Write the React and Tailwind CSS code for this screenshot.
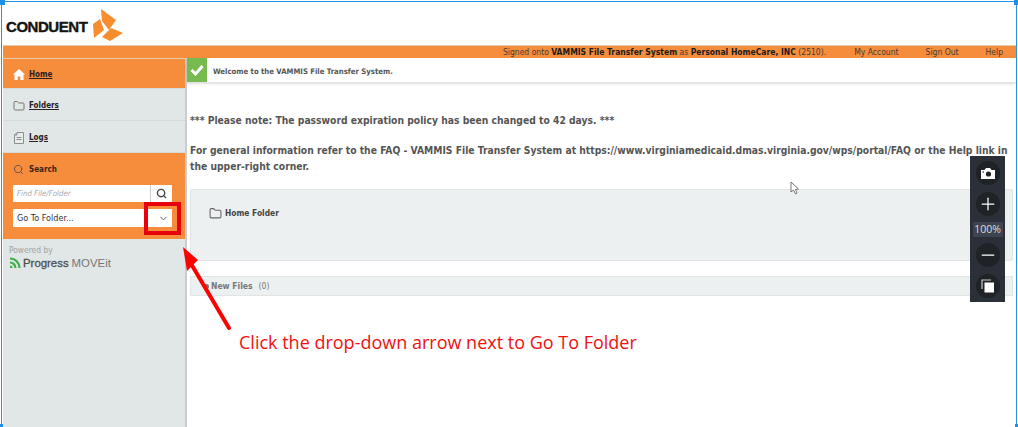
import React from "react";
import { Folder, Search, ChevronDown, Plus, Minus } from "lucide-react";

const Tag = ({ children }) => <span className="font-bold underline text-[#2a2020] text-[8px]">{children}</span>;

function NavRow({ icon, label, active, h }) {
  return (
    <div className={`flex items-center gap-[4px] pl-[10px] pt-[2px] border-b border-[#d5dbdb] ${h} ${active ? "bg-[#f68d3d]" : "bg-[#e1e6e6]"}`}>
      <span className="w-[12px] flex justify-center">{icon}</span>
      <Tag>{label}</Tag>
    </div>
  );
}

export default function App() {
  return (
    <div className="relative w-[1018px] h-[427px] overflow-hidden bg-white font-['DejaVu_Sans_Condensed','DejaVu_Sans',sans-serif] pl-[3px] pr-[2px] pt-[2px]">
      <header className="h-[43px] flex items-start pl-[3px]">
        <span className="mt-[17px] font-['Liberation_Sans',sans-serif] font-bold text-[15px] leading-[15px] text-[#141414] [-webkit-text-stroke:0.4px_#141414] tracking-[-0.45px]">CONDUENT</span>
        <svg width="33" height="33" viewBox="0 0 33 33" className="ml-[5px] mt-[7px]">
          <path d="M9 0 L24 11 L17 21 L10 12 Z" fill="#f68d2e" />
          <path d="M1 15 L8 10 L12 21 L2 29 Z" fill="#f68d2e" />
          <path d="M10 28 L19 19 L31 24 L18 32 Z" fill="#f68d2e" />
        </svg>
      </header>
      <div className="h-[13px] bg-[#f68d3d] border-t border-[#e8c9a8] flex items-center justify-end text-[8.5px] text-[#4a3a30]">
        <span className="mr-[28px]">Signed onto <b className="text-[#1c1c1c]">VAMMIS File Transfer System</b> as <b className="text-[#1c1c1c]">Personal HomeCare, INC</b> (2510).</span>
        <span className="mr-[27px]">My Account</span>
        <span className="mr-[27px]">Sign Out</span>
        <span className="mr-[13px]">Help</span>
      </div>
      <div className="flex h-[369px]">
        <aside className="w-[184px] shrink-0 bg-[#e1e6e6] border-t border-[#e8c9a8] border-r-2 border-r-[#c9cdcd]">
          <NavRow h="h-[30px]" active label="Home" icon={
            <svg width="12" height="11" viewBox="0 0 12 11" fill="white"><path d="M6 0 L12 5.5 L10.5 5.5 L10.5 11 L7.3 11 L7.3 7.5 L4.7 7.5 L4.7 11 L1.5 11 L1.5 5.5 L0 5.5 Z" /></svg>
          } />
          <NavRow h="h-[32px]" label="Folders" icon={<Folder size={12} color="#777" />} />
          <NavRow h="h-[32px]" label="Logs" icon={
            <svg width="10" height="12" viewBox="0 0 10 12" fill="#e8ecec" stroke="#8a8f8f" strokeWidth="1"><path d="M3 .5 H9.5 V11.5 H.5 V3 Z M.5 3 H3 V.5 M2.5 5.5 H7.5 M2.5 7.5 H7.5" /></svg>
          } />
          <div className="h-[86px] bg-[#f68d3d] px-[10px] pt-[10px]">
            <div className="flex items-center gap-[5px] h-[13px]">
              <Search size={11} color="#6a5040" />
              <span className="font-bold text-[8px] text-[#3a2418]">Search</span>
            </div>
            <div className="mt-[9px] flex h-[17px] w-[159px] bg-white rounded-[1px]">
              <span className="flex-1 pl-[4px] text-[7.8px] italic text-[#aaa] leading-[17px]">Find File/Folder</span>
              <span className="w-[22px] flex items-center justify-center border-l border-[#ccc]"><Search size={11} strokeWidth={3} color="#444" /></span>
            </div>
            <div className="mt-[7px] flex h-[18px] w-[159px] bg-white rounded-[1px]">
              <span className="flex-1 pl-[4px] text-[9px] text-[#333] leading-[18px]">Go To Folder...</span>
              <span className="w-[22px] pl-[5px] flex items-center justify-center"><ChevronDown size={11} color="#555" /></span>
            </div>
          </div>
          <div className="pl-[6px] pt-[6px]">
            <div className="text-[8.4px] text-[#a0a5a5] leading-[10px]">Powered by</div>
            <div className="flex items-center font-['Liberation_Sans',sans-serif] text-[11.4px] text-[#4a4f4f] leading-[14px] mt-[1px]">
              <svg width="12" height="12" viewBox="0 0 12 12" fill="none" stroke="#3fae49" strokeWidth="2.2" className="mr-[2px]">
                <path d="M1 1.5 A9.5 9.5 0 0 1 10.5 11 M1 5.5 A5.5 5.5 0 0 1 6.5 11 M1 9.5 A1.5 1.5 0 0 1 2.5 11" />
              </svg>
              <span className="[-webkit-text-stroke:0.3px_#4a4f4f]">Progress</span>
              <span className="ml-[3px] text-[#777]">MOVEit</span>
            </div>
          </div>
        </aside>
        <main className="flex-1 min-w-0">
          <div className="h-[25px] flex border-b border-[#e4e4e4] shadow-sm">
            <span className="w-[20px] h-[24px] bg-[#76bb4f] flex items-center justify-center">
              <svg width="14" height="12" viewBox="0 0 14 12"><path d="M1.5 6 L5.5 10 L12.5 2" stroke="white" strokeWidth="3" fill="none" /></svg>
            </span>
            <span className="ml-[6px] text-[7.7px] leading-[25px] pt-[1px] font-bold text-[#555]">Welcome to the VAMMIS File Transfer System.</span>
          </div>
          <div className="pl-[3px] pt-[29px] text-[10.25px] font-bold text-[#555] leading-[16px]">
            <p>*** Please note: The password expiration policy has been changed to 42 days. ***</p>
            <p className="mt-[14px] pr-[2px]">For general information refer to the FAQ - VAMMIS File Transfer System at https://www.virginiamedicaid.dmas.virginia.gov/wps/portal/FAQ or the Help link in the upper-right corner.</p>
          </div>
          <div className="mt-[15px] ml-[3px] mr-[3px] h-[72px] bg-[#edf0f0] border border-[#e2e5e5] rounded-[2px] flex items-start pl-[18px] pt-[17px] gap-[3px]">
            <Folder size={13} color="#666" />
            <span className="text-[8.4px] font-bold text-[#444]">Home Folder</span>
          </div>
          <div className="mt-[15px] ml-[3px] mr-[3px] h-[20px] bg-[#edf0f0] border border-[#e2e5e5] flex items-center pl-[13px] text-[8.5px] text-[#777]">
            <span className="w-[5px] h-[5px] rounded-full bg-[#777] mr-[2px]" />
            <b>New Files</b><span className="ml-[6px]">(0)</span>
          </div>
        </main>
      </div>

      {/* selection frame */}
      <div className="absolute left-[1px] top-[1px] right-[1px] bottom-[1px] border border-[#2196e8] border-b-0 pointer-events-none" />
      <div className="absolute left-0 top-0 w-[5px] h-[5px] bg-[#1e90e8]" />
      <div className="absolute right-0 top-0 w-[4px] h-[5px] bg-[#1e90e8]" />
      <div className="absolute left-0 bottom-0 w-[3px] h-[3px] bg-[#1e90e8]" />
      <div className="absolute right-0 bottom-0 w-[3px] h-[3px] bg-[#1e90e8]" />

      {/* annotation */}
      <div className="absolute left-[144px] top-[202px] w-[37px] h-[33px] border-[4px] border-[#e8000b]" />
      <svg width="70" height="100" viewBox="0 0 70 100" className="absolute left-[175px] top-[240px]">
        <path d="M54 88 L15 22" stroke="#f00" strokeWidth="4" strokeLinecap="round" />
        <path d="M8 7 L23 20 L12 31 Z" fill="#f00" />
      </svg>
      <div className="absolute left-[239px] top-[330px] text-[18px] leading-[24px] text-[#f01010] font-['Open_Sans',sans-serif]">Click the drop-down arrow next to Go To Folder</div>

      {/* cursor */}
      <svg width="10" height="14" viewBox="0 0 10 14" className="absolute left-[790px] top-[181px]">
        <path d="M1 1 V11 L3.5 9 L5.5 13 L7 12 L5.5 8.5 L8.5 8 Z" fill="white" stroke="#555" strokeWidth="0.8" />
      </svg>

      {/* zoom toolbar */}
      <div className="absolute left-[970px] top-[156px] w-[35px] h-[146px] bg-[#2b2f38] flex flex-col items-center pt-[5px] text-white">
        <span className="w-[24px] h-[24px] rounded-full bg-[#1f2226] flex items-center justify-center">
          <svg width="16" height="13" viewBox="0 0 16 13"><path d="M1 3 H4.5 L6 1 H10 L11.5 3 H15 V12 H1 Z" fill="white" /><circle cx="8.5" cy="7" r="2.6" fill="#1f2226" /><circle cx="3.2" cy="5" r="0.8" fill="#1f2226" /></svg>
        </span>
        <span className="mt-[7px] w-[24px] h-[24px] rounded-full bg-[#1f2226] flex items-center justify-center"><Plus size={20} strokeWidth={1.5} /></span>
        <span className="mt-[6px] w-[30px] h-[15px] bg-[#3d4350] text-[10.5px] leading-[15px] text-center text-[#ddd] font-['Open_Sans',sans-serif]">100%</span>
        <span className="mt-[6px] w-[24px] h-[24px] rounded-full bg-[#1f2226] flex items-center justify-center"><Minus size={20} strokeWidth={1.5} /></span>
        <span className="mt-[7px] w-[24px] h-[24px] rounded-full bg-[#1f2226] flex items-center justify-center">
          <svg width="14" height="14" viewBox="0 0 14 14"><path d="M1 10 V1 H10" fill="none" stroke="#ccc" strokeWidth="1.2" /><rect x="3.5" y="3.5" width="9.5" height="10" fill="white" /></svg>
        </span>
      </div>
    </div>
  );
}
